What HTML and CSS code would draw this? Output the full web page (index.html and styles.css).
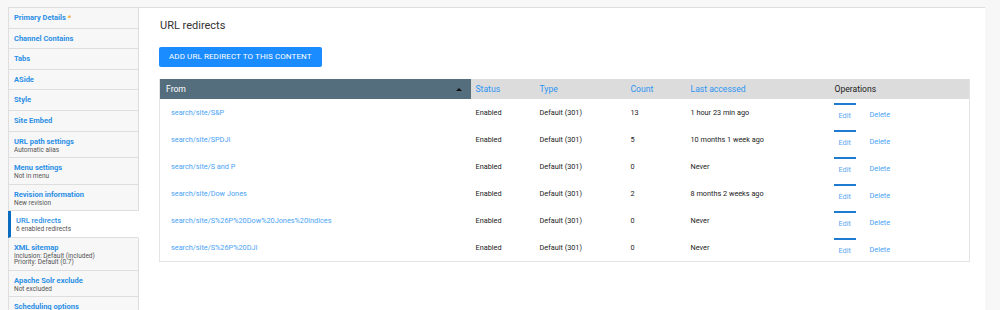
FILE: index.html
```html
<!DOCTYPE html>
<html lang="en">
<head>
    <meta charset="UTF-8">
    <meta name="viewport" content="width=device-width, initial-scale=1.0">
    <title>URL redirects</title>
    <link rel="stylesheet" href="styles.css">
</head>
<body>
    <div class="layout">
        <ul class="tabs">
            <li class="tab"><a href="#">Primary Details <span class="req">*</span></a></li>
            <li class="tab"><a href="#">Channel Contains</a></li>
            <li class="tab"><a href="#">Tabs</a></li>
            <li class="tab"><a href="#">ASide</a></li>
            <li class="tab"><a href="#">Style</a></li>
            <li class="tab"><a href="#">Site Embed</a></li>
            <li class="tab"><a href="#">URL path settings</a><span class="summary">Automatic alias</span></li>
            <li class="tab"><a href="#">Menu settings</a><span class="summary">Not in menu</span></li>
            <li class="tab"><a href="#">Revision information</a><span class="summary">New revision</span></li>
            <li class="tab selected"><a href="#">URL redirects</a><span class="summary">6 enabled redirects</span></li>
            <li class="tab"><a href="#">XML sitemap</a><span class="summary">Inclusion: Default (included)<br>Priority: Default (0.7)</span></li>
            <li class="tab"><a href="#">Apache Solr exclude</a><span class="summary">Not excluded</span></li>
            <li class="tab"><a href="#">Scheduling options</a></li>
        </ul>

        <div class="pane">
            <h2>URL redirects</h2>
            <a href="#" class="button">Add URL redirect to this content</a>

            <table class="redirects">
                <thead>
                    <tr>
                        <th class="col-from active">From <span class="sort"></span></th>
                        <th class="col-status"><a href="#">Status</a></th>
                        <th class="col-type"><a href="#">Type</a></th>
                        <th class="col-count"><a href="#">Count</a></th>
                        <th class="col-access"><a href="#">Last accessed</a></th>
                        <th class="col-ops">Operations</th>
                    </tr>
                </thead>
                <tbody>
                    <tr>
                        <td class="col-from"><a href="#">search/site/S&amp;P</a></td>
                        <td>Enabled</td><td>Default (301)</td><td>13</td><td>1 hour 23 min ago</td>
                        <td class="ops"><a href="#" class="edit">Edit</a><a href="#">Delete</a></td>
                    </tr>
                    <tr>
                        <td class="col-from"><a href="#">search/site/SPDJI</a></td>
                        <td>Enabled</td><td>Default (301)</td><td>5</td><td>10 months 1 week ago</td>
                        <td class="ops"><a href="#" class="edit">Edit</a><a href="#">Delete</a></td>
                    </tr>
                    <tr>
                        <td class="col-from"><a href="#">search/site/S and P</a></td>
                        <td>Enabled</td><td>Default (301)</td><td>0</td><td>Never</td>
                        <td class="ops"><a href="#" class="edit">Edit</a><a href="#">Delete</a></td>
                    </tr>
                    <tr>
                        <td class="col-from"><a href="#">search/site/Dow Jones</a></td>
                        <td>Enabled</td><td>Default (301)</td><td>2</td><td>8 months 2 weeks ago</td>
                        <td class="ops"><a href="#" class="edit">Edit</a><a href="#">Delete</a></td>
                    </tr>
                    <tr>
                        <td class="col-from"><a href="#">search/site/S%26P%20Dow%20Jones%20Indices</a></td>
                        <td>Enabled</td><td>Default (301)</td><td>0</td><td>Never</td>
                        <td class="ops"><a href="#" class="edit">Edit</a><a href="#">Delete</a></td>
                    </tr>
                    <tr>
                        <td class="col-from"><a href="#">search/site/S%26P%20DJI</a></td>
                        <td>Enabled</td><td>Default (301)</td><td>0</td><td>Never</td>
                        <td class="ops"><a href="#" class="edit">Edit</a><a href="#">Delete</a></td>
                    </tr>
                </tbody>
            </table>
        </div>
    </div>
</body>
</html>
```

FILE: styles.css
```css
* {
    margin: 0;
    padding: 0;
    box-sizing: border-box;
}

body {
    font-family: 'Roboto', 'Liberation Sans', sans-serif;
    background-color: #f7f7f7;
    color: #222;
    padding: 7px 15px 0 8px;
}

a {
    text-decoration: none;
    color: #3d9bf0;
}

.layout {
    display: flex;
    width: 977px;
    border-top: 1px solid #dedede;
    border-right: 1px solid #dedede;
    min-height: 310px;
}

/* vertical tabs */
.tabs {
    list-style: none;
    width: 131px;
    flex-shrink: 0;
    border-left: 1px solid #dedede;
    background-color: #f7f7f7;
}

.tab {
    padding: 5px 5px 4.6px 5px;
    border-bottom: 1px solid #dedede;
    border-right: 1px solid #dedede;
    line-height: 10px;
}

.tab a {
    display: block;
    font-size: 7.5px;
    font-weight: bold;
    color: #2b8fe6;
}

.tab .req {
    color: #f5a623;
}

.tab .summary {
    display: block;
    font-size: 6.5px;
    line-height: 6px;
    color: #555;
}

.tab.selected {
    background-color: #fff;
    border-right-color: #fff;
    border-left: 3px solid #0a6cc0;
    margin-left: -1px;
    padding-left: 5px;
}

.tab.selected a {
    font-weight: 500;
}

/* main pane */
.pane {
    flex: 1;
    display: flex;
    flex-direction: column;
    align-items: flex-start;
    background-color: #fff;
    padding: 10px 15px 0 20px;
}

.pane h2 {
    font-size: 11px;
    font-weight: normal;
    color: #333;
    line-height: 16px;
    margin-left: 1px;
    margin-bottom: 13px;
}

.button {
    height: 20px;
    line-height: 20px;
    padding: 0 10px;
    background-color: #1a8cff;
    color: #fff;
    font-size: 8px;
    text-transform: uppercase;
    letter-spacing: 0.1px;
    border-radius: 2px;
    margin-bottom: 12px;
}

.redirects {
    width: 811px;
    border-collapse: collapse;
    table-layout: fixed;
    border: 1px solid #e4e4e4;
    border-top: none;
    font-size: 7.3px;
}

.redirects th {
    height: 20px;
    background-color: #dcdcdc;
    text-align: left;
    font-weight: normal;
    font-size: 8.6px;
    padding: 0 5px;
    color: #222;
}

.redirects th a {
    color: #2d95f2;
}

.redirects th.active {
    background-color: #546e7d;
    color: #fff;
    padding-left: 6px;
    position: relative;
}

.sort {
    position: absolute;
    right: 9px;
    top: 9px;
    border-left: 3px solid transparent;
    border-right: 3px solid transparent;
    border-bottom: 3px solid #111;
}

.col-from { width: 311px; }
.col-status { width: 64px; }
.col-type { width: 91px; }
.col-count { width: 60px; }
.col-access { width: 144px; }

.redirects td {
    height: 27px;
    padding: 0 5px;
    color: #222;
}

.redirects td.col-from {
    padding-left: 11px;
}

.redirects td a {
    color: #4aa3f5;
}

.redirects td.ops {
    white-space: nowrap;
    vertical-align: top;
    padding: 4px 4px 0;
}

.ops a {
    display: inline-block;
    vertical-align: top;
    line-height: 9px;
    padding-top: 7px;
}

.ops .edit {
    width: 22px;
    border-top: 2px solid #1f7ad1;
    padding-top: 6px;
    padding-left: 5px;
    margin-right: 14px;
    color: #5aa9f0;
}
```
